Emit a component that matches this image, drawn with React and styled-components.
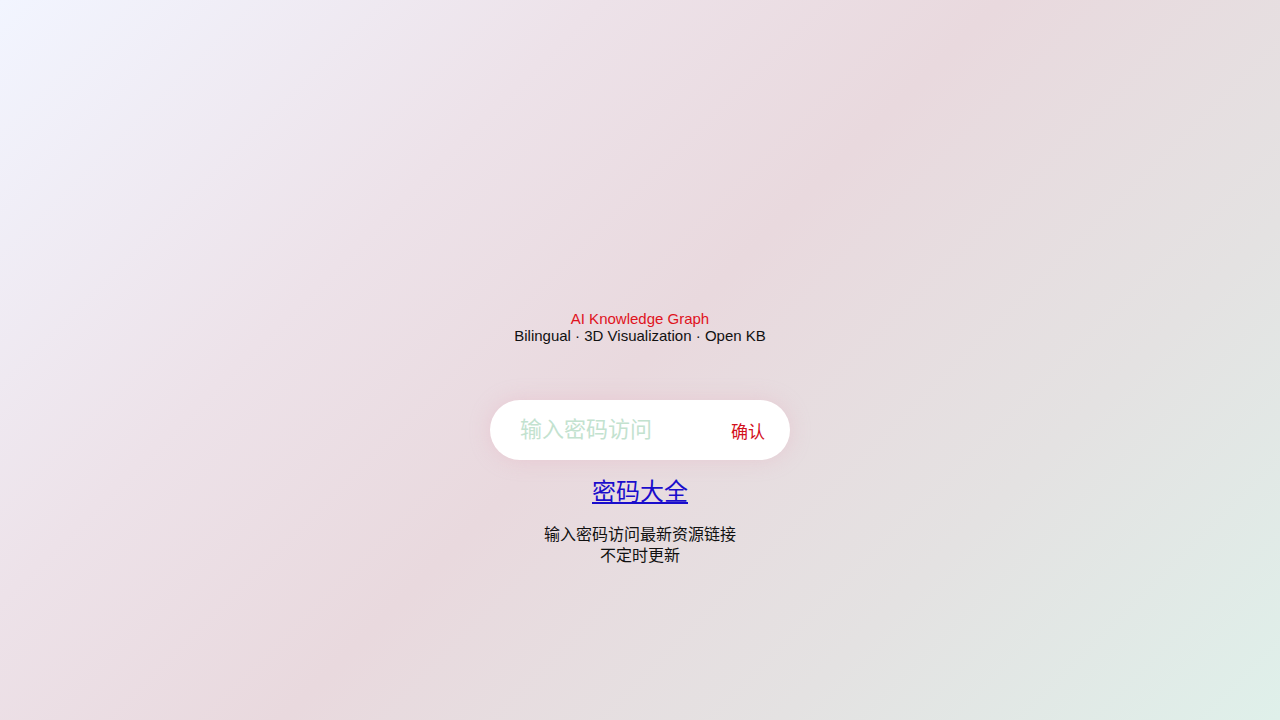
import React from 'react';
import styled, { createGlobalStyle } from 'styled-components';

const GlobalStyle = createGlobalStyle`
  html, body {
    margin: 0;
    padding: 0;
    height: 100%;
  }
  body {
    font-family: 'Liberation Sans', Arial, 'Noto Sans CJK SC', sans-serif;
    background: linear-gradient(135deg, #f2f5ff 0%, #ede2e9 30%, #e9d9de 50%, #e4e2e2 75%, #dff0ea 100%);
    min-height: 100vh;
    color: #111;
  }
`;

const Page = styled.div`
  height: 100vh;
  display: flex;
  flex-direction: column;
  align-items: center;
  padding-top: 310px;
  box-sizing: border-box;
  text-align: center;
`;

const Title = styled.div`
  font-size: 15px;
  line-height: 17px;
  color: #e0121c;
`;

const Subtitle = styled.div`
  font-size: 15px;
  line-height: 17px;
  color: #111;
`;

const Form = styled.form`
  margin-top: 56px;
  width: 300px;
  height: 60px;
  border-radius: 30px;
  background: #fff;
  box-shadow: 0 0 20px rgba(230, 170, 185, 0.35);
  display: flex;
  align-items: center;
  padding: 0 25px 0 30px;
  box-sizing: border-box;
`;

const Input = styled.input`
  flex: 1;
  min-width: 0;
  border: none;
  outline: none;
  background: transparent;
  font-family: 'Liberation Sans', Arial, 'Noto Sans CJK SC', sans-serif;
  font-size: 22px;
  color: #333;
  padding: 0;
  &::placeholder {
    color: #c3e2cf;
  }
`;

const Confirm = styled.button`
  border: none;
  background: none;
  padding: 0;
  font-family: 'Liberation Sans', Arial, 'Noto Sans CJK SC', sans-serif;
  font-size: 17px;
  color: #d3101c;
  cursor: pointer;
`;

const Link = styled.a`
  margin-top: 18px;
  font-size: 24px;
  line-height: 28px;
  color: #1a0dcc;
  text-decoration: underline;
`;

const Note = styled.div`
  margin-top: 18px;
  font-size: 16px;
  line-height: 21px;
  color: #111;
`;

function App() {
  return (
    <>
      <GlobalStyle />
      <Page>
        <Title>AI Knowledge Graph</Title>
        <Subtitle>Bilingual · 3D Visualization · Open KB</Subtitle>
        <Form onSubmit={(e) => e.preventDefault()}>
          <Input type="password" placeholder="输入密码访问" />
          <Confirm type="submit">确认</Confirm>
        </Form>
        <Link href="#">密码大全</Link>
        <Note>
          输入密码访问最新资源链接
          <br />
          不定时更新
        </Note>
      </Page>
    </>
  );
}

export default App;
